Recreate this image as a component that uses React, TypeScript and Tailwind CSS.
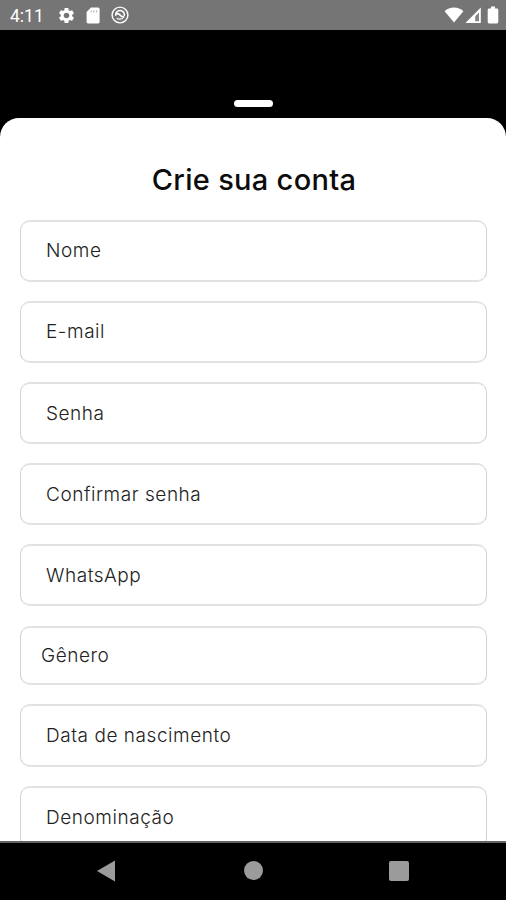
import React from "react";
import { MdSettings } from "react-icons/md";

const fields = [
  { label: "Nome", box: "h-[62px] mb-[19px] pl-[25px]" },
  { label: "E-mail", box: "h-[62px] mb-[19px] pl-[25px]" },
  { label: "Senha", box: "h-[62px] mb-[19px] pl-[25px] pt-[2px]" },
  { label: "Confirmar senha", box: "h-[62px] mb-[19px] pl-[25px] pt-[2px]" },
  { label: "WhatsApp", box: "h-[62px] mb-[20px] pl-[25px] pt-[2px]" },
  { label: "Gênero", box: "h-[59px] mb-[19px] pl-[20px]" },
  { label: "Data de nascimento", box: "h-[63px] mb-[19px] pl-[25px]" },
  { label: "Denominação", box: "h-[62px] pl-[25px] pt-px" },
];

function StatusBar() {
  return (
    <header className="flex h-[30px] shrink-0 items-center bg-[#757575] pl-[10px] pr-[7px] text-white">
      <span className="w-[47px] font-[Roboto,sans-serif] text-[17.5px] leading-[30px] pt-[2px]">4:11</span>
      <MdSettings className="h-[19px] w-[19px]" />
      {/* SD card */}
      <svg viewBox="0 0 14 17" className="ml-[10px] h-[17px] w-[14px]" fill="currentColor">
        <path d="M5 0.5H12.2Q13.6 0.5 13.6 2V15Q13.6 16.4 12.2 16.4H2Q0.6 16.4 0.6 15V5Z" />
        <path d="M5.2 3.4V5.4M7.8 3.4V5.4M10.4 3.4V5.4" stroke="#a8a8a8" strokeWidth="1" />
      </svg>
      {/* Circle notification */}
      <svg viewBox="0 0 18 18" className="ml-[11px] h-[18px] w-[18px]" fill="none" stroke="currentColor">
        <circle cx="9" cy="9" r="7.9" strokeWidth="1.4" />
        <path d="M4.9 9.8A4.3 4.3 0 1 1 13.2 10" strokeWidth="1.5" />
        <path d="M4.8 8Q7.4 6.8 9 9T13.2 11" strokeWidth="1.8" />
        <path d="M5.8 12.2Q8.6 14.2 11.8 12.2" strokeWidth="1.3" />
      </svg>
      <div className="ml-auto flex items-center">
        <svg viewBox="0 0 20 16" className="mr-px h-[16px] w-[20px]" fill="currentColor">
          <path d="M10 15.6L0.6 4.2Q4.5 0.6 10 0.6T19.4 4.2Z" />
        </svg>
        <svg viewBox="0 0 17 17" className="h-[17px] w-[17px]">
          <path d="M15.8 0.6V16H0.4Z" fill="currentColor" />
          <path d="M14 5.4V14.2H10.2V9.2Z" fill="#858585" />
        </svg>
        <svg viewBox="0 0 12 18" className="ml-[5px] h-[18px] w-[12px]" fill="currentColor">
          <path d="M4 0.6H8V2.4H9.9Q11.3 2.4 11.3 3.8V16Q11.3 17.4 9.9 17.4H2.1Q0.7 17.4 0.7 16V3.8Q0.7 2.4 2.1 2.4H4Z" />
        </svg>
      </div>
    </header>
  );
}

function NavigationBar() {
  return (
    <nav className="flex h-[59px] shrink-0 items-center border-t-2 border-[#636363] bg-black pb-[2px] pl-[96px] pr-[97px]">
      <svg viewBox="0 0 20 22" className="h-[22px] w-[20px]" fill="#9b9b9b">
        <path d="M19 0.5V21.5L1 11Z" />
      </svg>
      <div className="ml-[128px] h-[19px] w-[19px] rounded-full bg-[#9b9b9b]" />
      <div className="ml-auto h-[20px] w-[20px] rounded-[2px] bg-[#9b9b9b]" />
    </nav>
  );
}

function App() {
  return (
    <div className="flex h-[900px] w-[506px] flex-col overflow-hidden bg-black font-[Inter,sans-serif]">
      <StatusBar />
      <div className="flex h-[88px] shrink-0 justify-center pt-[70px]">
        <div className="h-[7px] w-[39px] rounded-full bg-white" />
      </div>

      <main className="min-h-0 flex-1 overflow-hidden rounded-t-[19px] bg-white px-5 pt-[42px]">
        <h1 className="mb-[20px] pl-[2px] text-center text-[29px] font-medium leading-[40px] tracking-[0.3px] text-[#0c0c0c]">
          Crie sua conta
        </h1>
        <form className="w-[467px]">
          {fields.map((field) => (
            <div
              key={field.label}
              className={`flex items-center rounded-[10px] border-x border-y-2 border-x-[#d2d2d2] border-y-[#e2e2e2] ${field.box}`}
            >
              <label className="text-[19px] font-light leading-6 tracking-[0.55px] text-[#222222]">{field.label}</label>
            </div>
          ))}
        </form>
      </main>

      <NavigationBar />
    </div>
  );
}

export default App;
